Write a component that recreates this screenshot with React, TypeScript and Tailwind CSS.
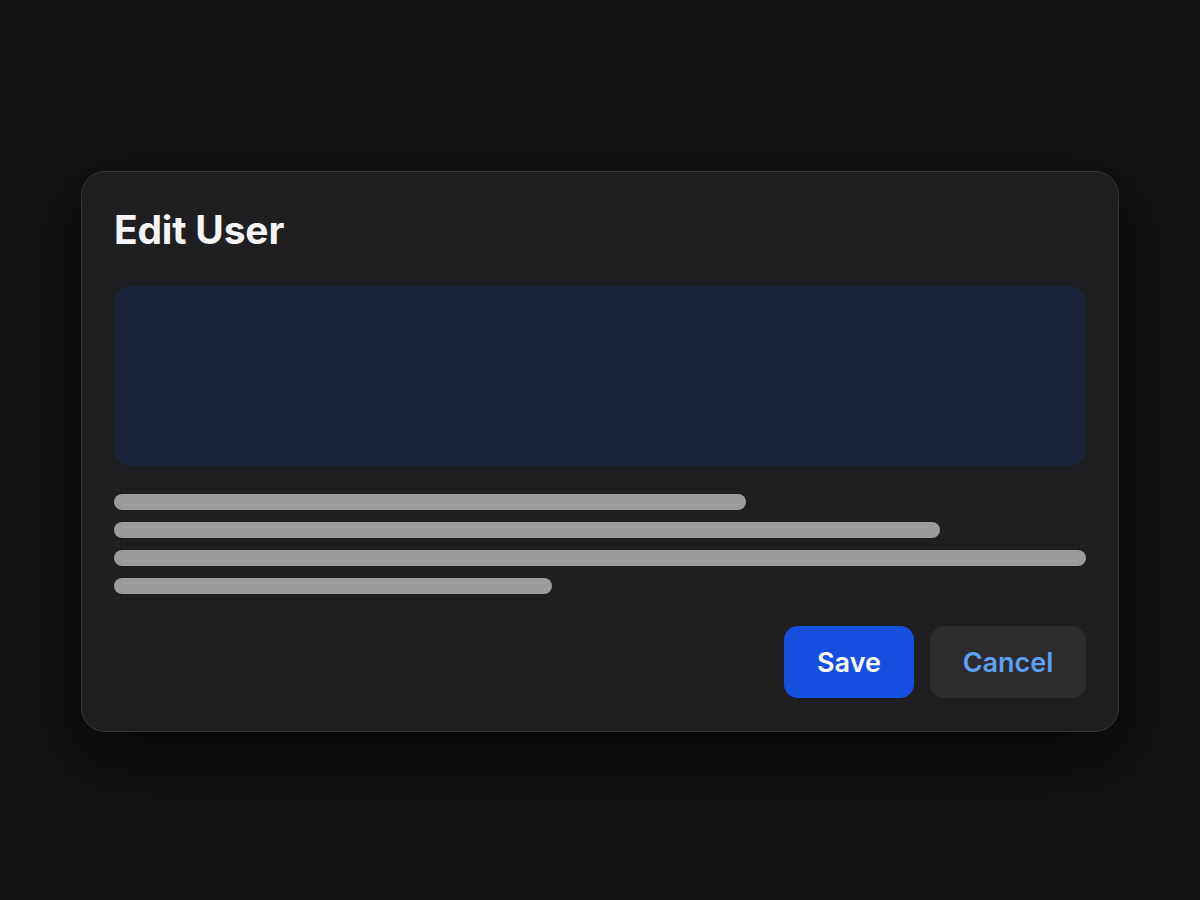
export default function App() {
  const lines = ['w-[632px]', 'w-[826px]', 'w-full', 'w-[438px]'];

  return (
    <div className="flex h-[900px] w-full items-center justify-center bg-[#111213] pt-[2px] font-['Inter',sans-serif]">
      {/* Dialog */}
      <div className="w-[1038px] rounded-[24px] border border-[#38383a] bg-[#1f1f21] px-8 pt-8 pb-[33px] shadow-[0_24px_60px_rgba(0,0,0,0.6)]">
        <h1 className="pt-[6px] text-[39px] font-bold leading-[40px] tracking-[-0.2px] text-[#f5f5f7]">Edit User</h1>

        <div className="mt-[36px] h-[180px] rounded-[16px] bg-[#1b2439]" />

        <div className="mt-[28px] flex flex-col gap-3">
          {lines.map((w, i) => (
            <div key={i} className={`h-4 rounded-full bg-[#9c9c9c] ${w}`} />
          ))}
        </div>

        <div className="mt-8 flex justify-end gap-4">
          <button className="h-[72px] w-[130px] rounded-[14px] bg-[#1550e0] pt-[3px] text-[27px] font-semibold text-white">
            Save
          </button>
          <button className="h-[72px] w-[156px] rounded-[14px] bg-[#2c2c2e] pt-[3px] text-[27px] font-semibold text-[#5ea0f0]">
            Cancel
          </button>
        </div>
      </div>
    </div>
  );
}
